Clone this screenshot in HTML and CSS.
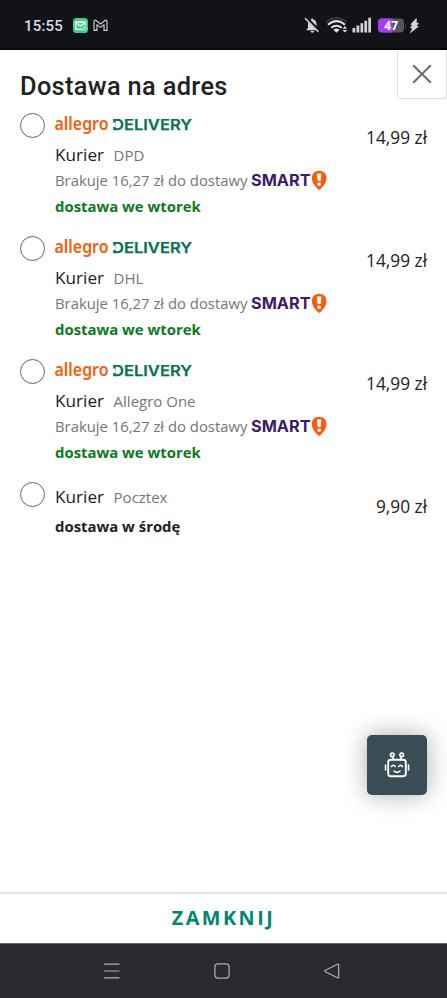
FILE: index.html
```html
<!DOCTYPE html>
<html lang="pl">
<head>
<meta charset="utf-8">
<title>Dostawa na adres</title>
<link rel="stylesheet" href="styles.css">
</head>
<body>
<header class="status">
  <span class="clock">15:55</span>
  <svg class="mail" width="15" height="15" viewBox="0 0 15 15" fill="none">
    <rect width="15" height="15" rx="3.6" fill="#3fcf8a"/>
    <path d="M9.3 11.3H2.8V4h9.3v3.6M2.8 4.5l4.5 3.7 4.8-3.7" stroke="#fff" stroke-width="1.3"/>
    <circle cx="11.6" cy="10.5" r="1.5" stroke="#dff8eb"/>
  </svg>
  <svg class="gmail" width="15" height="13" viewBox="0 0 15 13" fill="none" stroke="#c9cacd" stroke-width="1.2" stroke-linejoin="round">
    <path d="M1 2.4Q1 1 2.4 1L7.5 5 12.6 1Q14 1 14 2.4V11.4H11V5.6L7.5 8.4 4 5.6V11.4H1z"/>
  </svg>
  <svg class="sysicons" width="115" height="20" viewBox="0 0 115 20">
    <path d="M2.8 13.3L4 11.9V8.1c0-2.600 1.400-4.300 3.400-4.700V2.500h1.700v.9c2.200.4 3.400 2.100 3.400 4.700v3.800l1.400 1.400v.9H2.800zM6.500 15h3.600c0 2.300-3.600 2.300-3.600 0z" fill="#d4d5d8"/>
    <path d="M2.300 1.700L15.500 15.300" stroke="#121318" stroke-width="3"/>
    <path d="M1 2.200L14.400 15.800" stroke="#d4d5d8" stroke-width="1.500"/>
    <g fill="none" stroke-width="2">
      <path d="M22.300 6Q32.500-2 42.500 6" stroke="#393a40"/>
      <path d="M24 8.700Q32.500 1.600 41 8.700M27.200 11.800Q32.500 7.600 37.800 11.800" stroke="#dedfe2"/>
    </g>
    <path d="M29.400 13.700q3.100-2.200 6.200 0l-3.100 3.100zM38.500 12.700l2.300-2.600 2.300 2.600zM38.500 14l2.300 2.600 2.300-2.600z" fill="#dedfe2"/>
    <path d="M48.500 12h2.800v4.500h-2.800zM52.500 9.600h2.800v6.900h-2.800zM56.500 7.200h2.700v9.300h-2.700zM60.400 4.800h2.700v11.700h-2.700zM64.300 1.800H67v14.700h-2.700z" fill="#d4d5d8"/>
    <rect x="74" y="2.500" width="26" height="14" rx="4" fill="#56575c"/>
    <path d="M88.500 2.500H78q-4 0-4 4v6q0 4 4 4h10.500z" fill="#a63cf5"/>
    <path d="M101 6.500q1.600 3 0 6z" fill="#56575c"/>
    <text class="charge" x="80.300" y="14.200" textLength="13.700" lengthAdjust="spacingAndGlyphs">47</text>
    <path d="M112.600 1.800L106.200 8.400l2.200.6-2.600 2.600 2.300.6-2.300 5.200 9-7-2.200-.7 2.600-2.500-2.400-.5z" fill="#d4d5d8"/>
  </svg>
</header>

<main class="sheet">
  <div class="heading">
    <h1>Dostawa na adres</h1>
    <button class="close" aria-label="Zamknij"><svg width="20" height="20" viewBox="0 0 20 20"><path d="M1.200 1.200l17.600 17.600M18.800 1.200L1.200 18.800" stroke="#6b6b6b" stroke-width="2"/></svg></button>
  </div>
  <ul class="options">
    <li class="option">
      <span class="radio"></span>
      <div class="info">
        <svg class="logo" width="138" height="24" viewBox="0 0 138 24">
          <text class="allegro" x="-.5" y="16.800" textLength="54" lengthAdjust="spacingAndGlyphs">allegro</text>
          <text class="deliver" x="57" y="17" textLength="80" lengthAdjust="spacingAndGlyphs">DELIVERY</text>
          <path d="M56 9.500h4.500v4.500H56z" fill="#fff"/>
        </svg>
        <div class="name">Kurier <small>DPD</small></div>
        <div class="missing">Brakuje 16,27 zł do dostawy <svg width="76" height="22" viewBox="0 0 76 22">
          <text class="smarttext" x="0" y="17" textLength="59.500" lengthAdjust="spacingAndGlyphs">SMART</text>
          <path class="pin" d="M68.200 1.700c4.300 0 7.300 3 7.300 7.200 0 5-3.500 8.800-7.300 12.200-3.800-3.400-7.300-7.200-7.300-12.200 0-4.200 3-7.200 7.300-7.200z"/>
          <path class="bang" d="M66 4.600h4.400l-.7 7.500h-3zM68.200 13.200a1.900 1.900 0 1 1 0 3.800a1.900 1.900 0 1 1 0-3.800z"/>
        </svg></div>
        <div class="when">dostawa we wtorek</div>
      </div>
      <span class="price">14,99 zł</span>
    </li>
    <li class="option">
      <span class="radio"></span>
      <div class="info">
        <svg class="logo" width="138" height="24" viewBox="0 0 138 24">
          <text class="allegro" x="-.5" y="16.800" textLength="54" lengthAdjust="spacingAndGlyphs">allegro</text>
          <text class="deliver" x="57" y="17" textLength="80" lengthAdjust="spacingAndGlyphs">DELIVERY</text>
          <path d="M56 9.500h4.500v4.500H56z" fill="#fff"/>
        </svg>
        <div class="name">Kurier <small>DHL</small></div>
        <div class="missing">Brakuje 16,27 zł do dostawy <svg width="76" height="22" viewBox="0 0 76 22">
          <text class="smarttext" x="0" y="17" textLength="59.500" lengthAdjust="spacingAndGlyphs">SMART</text>
          <path class="pin" d="M68.200 1.700c4.300 0 7.300 3 7.300 7.200 0 5-3.500 8.800-7.300 12.200-3.800-3.400-7.300-7.200-7.300-12.200 0-4.200 3-7.200 7.300-7.200z"/>
          <path class="bang" d="M66 4.600h4.400l-.7 7.500h-3zM68.200 13.200a1.900 1.900 0 1 1 0 3.800a1.900 1.900 0 1 1 0-3.800z"/>
        </svg></div>
        <div class="when">dostawa we wtorek</div>
      </div>
      <span class="price">14,99 zł</span>
    </li>
    <li class="option">
      <span class="radio"></span>
      <div class="info">
        <svg class="logo" width="138" height="24" viewBox="0 0 138 24">
          <text class="allegro" x="-.5" y="16.800" textLength="54" lengthAdjust="spacingAndGlyphs">allegro</text>
          <text class="deliver" x="57" y="17" textLength="80" lengthAdjust="spacingAndGlyphs">DELIVERY</text>
          <path d="M56 9.500h4.500v4.500H56z" fill="#fff"/>
        </svg>
        <div class="name">Kurier <small>Allegro One</small></div>
        <div class="missing">Brakuje 16,27 zł do dostawy <svg width="76" height="22" viewBox="0 0 76 22">
          <text class="smarttext" x="0" y="17" textLength="59.500" lengthAdjust="spacingAndGlyphs">SMART</text>
          <path class="pin" d="M68.200 1.700c4.300 0 7.300 3 7.300 7.200 0 5-3.500 8.800-7.300 12.200-3.800-3.400-7.300-7.200-7.300-12.200 0-4.200 3-7.200 7.300-7.200z"/>
          <path class="bang" d="M66 4.600h4.400l-.7 7.500h-3zM68.200 13.200a1.900 1.900 0 1 1 0 3.800a1.900 1.900 0 1 1 0-3.800z"/>
        </svg></div>
        <div class="when">dostawa we wtorek</div>
      </div>
      <span class="price">14,99 zł</span>
    </li>
    <li class="option plain">
      <span class="radio"></span>
      <div class="info">
        <div class="name">Kurier <small>Pocztex</small></div>
        <div class="when">dostawa w środę</div>
      </div>
      <span class="price">9,90 zł</span>
    </li>
  </ul>
  <button class="bot" aria-label="Asystent">
    <svg width="26" height="26" viewBox="0 0 26 26" fill="none" stroke="#fff" stroke-width="1.600" stroke-linecap="round" stroke-linejoin="round">
      <rect x="4.200" y="7.700" width="17.600" height="16.500" rx="2.500" stroke-width="1.900"/>
      <path d="M8.800 4.600L9.400 7.500M17.200 4.600L16.600 7.500M1.500 13v5M24.500 13v5"/>
      <circle cx="8.300" cy="2.800" r="1.800"/><circle cx="17.700" cy="2.800" r="1.800"/>
      <path d="M7.500 14.500q1.900-2.500 3.800 0M14.700 14.500q1.900-2.500 3.800 0M10 19q3 2.800 6 0"/>
    </svg>
  </button>
</main>

<footer class="footer"><button class="dismiss">ZAMKNIJ</button></footer>

<nav class="navbar">
  <svg width="16" height="16" viewBox="0 0 16 16" stroke="#aeafb2" stroke-width="1.200"><path d="M0 1.200h15.500M0 8h15.500M0 14.800h15.500"/></svg>
  <svg width="16" height="16" viewBox="0 0 16 16" fill="none" stroke="#aeafb2" stroke-width="1.200"><rect x=".9" y=".9" width="14.200" height="14.200" rx="3"/></svg>
  <svg width="16" height="16" viewBox="0 0 16 16" fill="none" stroke="#aeafb2" stroke-width="1.200" stroke-linejoin="round"><path d="M1.400 7.300L13.500 1.200q1.200-.5 1.200.8v12q0 1.300-1.200.8L1.400 8.700q-1.100-.7 0-1.400z"/></svg>
</nav>
</body>
</html>
```
FILE: styles.css
```css
* { box-sizing: border-box; margin: 0; padding: 0; }
body {
  width: 447px; height: 998px; overflow: hidden;
  display: flex; flex-direction: column;
  background: #fff; color: #222;
  font-family: "Open Sans", sans-serif;
}
button { border: 0; background: none; font: inherit; }
svg { overflow: visible; }

.status {
  height: 50px; flex: none; display: flex; align-items: center;
  padding: 3px 28px 0 24px;
  background: #121318; border-bottom: 2px solid #08090b;
}
.clock { font: 500 15px/20px Roboto, sans-serif; letter-spacing: .2px; color: #dcdde0; width: 49px; }
.gmail { margin-left: 5px; }
.sysicons { margin-left: auto; }
.charge { font: 700 12.5px "Open Sans", sans-serif; fill: #fff; }

.sheet { flex: 1; position: relative; }
.heading { display: flex; justify-content: space-between; height: 63px; }
h1 {
  padding: 20px 0 0 20px;
  font: 500 25.4px/32px Roboto, sans-serif; letter-spacing: .32px; color: #222;
}
.close {
  width: 50px; height: 49px; border: 1px solid #ddd; border-top: 0; border-radius: 0 0 3px 3px;
  display: flex; align-items: center; justify-content: center;
}

.options { list-style: none; padding: 0 20px; }
.option { display: flex; height: 123.1px; }
.radio { width: 25px; height: 25px; border: 1.3px solid #666; border-radius: 50%; flex: none; }
.info { flex: 1; padding-left: 10px; }
.logo { display: block; margin-bottom: 6px; }
.name { height: 24px; font-size: 17.2px; line-height: 24px; }
.name small { margin-left: 5px; font-size: 15px; color: #767676; }
.missing {
  height: 25px; margin-bottom: 1px; display: flex; align-items: center;
  font-size: 14.85px; line-height: 24px; color: #767676; white-space: pre;
}
.when { font-size: 14.9px; line-height: 27px; font-weight: 700; color: #0c7a1c; }
.plain .name { margin-top: 3px; }
.plain .when { margin-top: 4px; color: #222; }
.price { font-size: 17.3px; line-height: 50px; white-space: nowrap; }

.allegro { font: 600 17px "Noto Sans", sans-serif; fill: #f2600c; }
.deliver { font: 600 14.6px Inter, sans-serif; fill: #0a7054; stroke: #0a7054; stroke-width: .25px; }
.smarttext { font: 700 16px Inter, sans-serif; fill: #3c1b6b; }
.pin { fill: #fa5a0a; }
.bang { fill: #fff; }

.bot {
  position: absolute; right: 20px; bottom: 97.5px; width: 60px; height: 60px;
  display: flex; align-items: center; justify-content: center;
  background: #3a4d57; border-radius: 5px; box-shadow: 0 0 24px rgba(0, 0, 0, .33);
}

.footer { flex: none; height: 51px; border-top: 2px solid #e6e6e6; display: flex; align-items: center; justify-content: center; }
.dismiss { font-size: 19.8px; font-weight: 700; letter-spacing: 2.5px; line-height: 28px; padding-bottom: 1px; color: #00856f; }
.navbar {
  flex: none; height: 55px; display: flex; justify-content: space-between;
  padding: 19px 107px 0 104px; background: #292a30; border-top: 1px solid #66676a;
}
```
